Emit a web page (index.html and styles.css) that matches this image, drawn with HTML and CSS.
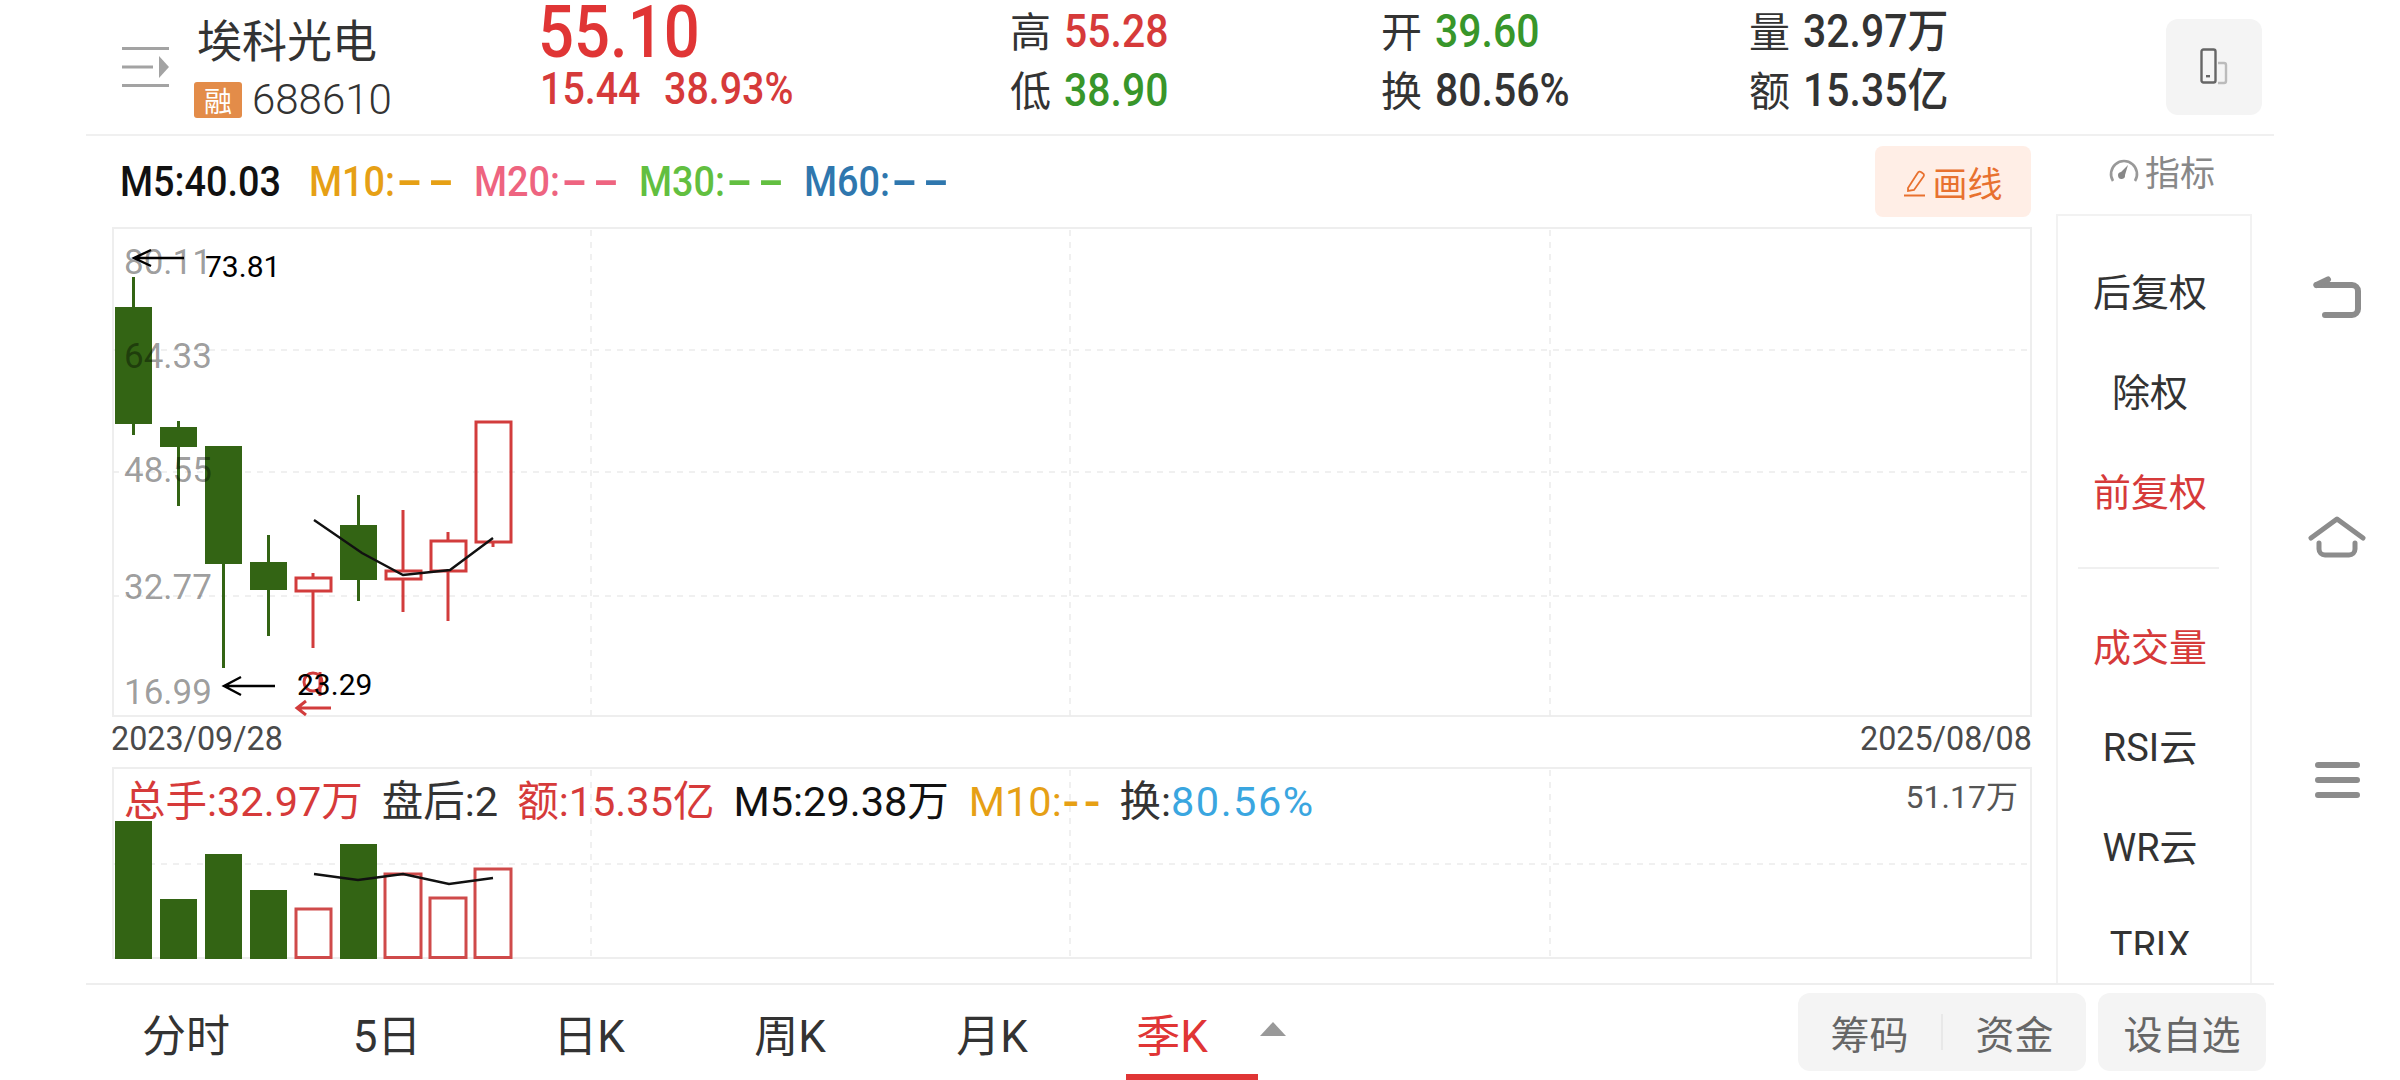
FILE: index.html

```html
<!DOCTYPE html>
<html lang="zh">
<head>
  <meta charset="UTF-8" />
  <title>埃科光电 688610</title>
  <link rel="stylesheet" href="styles.css">
</head>
<body>
<div class="screen">
  <div class="app">

    <!-- Header -->
    <div class="header">
      <svg class="menu-icon" width="47" height="40" viewBox="0 0 47 40">
        <path d="M0 1.500h47M0 20h31M0 38.500h47" stroke="#a3a3a3" stroke-width="3" fill="none"/>
        <path d="M37 9l10 11-10 11z" fill="#a3a3a3"/>
      </svg>
      <div class="stock-name">
        <div class="name">埃科光电</div>
        <div class="code-row"><span class="rong">融</span><span class="code">688610</span></div>
      </div>
      <div class="price-box">
        <div class="price">55.10</div>
        <div class="change"><span>15.44</span><span>38.93%</span></div>
      </div>
      <div class="stats">
        <div class="stat-col col-a">
          <div class="stat">高 <b class="red">55.28</b></div>
          <div class="stat">低 <b class="green">38.90</b></div>
        </div>
        <div class="stat-col col-b">
          <div class="stat">开 <b class="green">39.60</b></div>
          <div class="stat">换 <b>80.56%</b></div>
        </div>
        <div class="stat-col col-c">
          <div class="stat">量 <b>32.97万</b></div>
          <div class="stat">额 <b>15.35亿</b></div>
        </div>
      </div>
      <div class="device-btn">
        <svg width="28" height="38" viewBox="0 0 28 38">
          <rect x="1.500" y="1.500" width="14" height="33" rx="2" fill="none" stroke="#666" stroke-width="2.400"/>
          <rect x="6" y="27" width="4" height="2.400" fill="#666"/>
          <path d="M18 15h6a2 2 0 0 1 2 2v16a2 2 0 0 1-2 2h-6" fill="none" stroke="#bbb" stroke-width="2.400"/>
        </svg>
      </div>
    </div>

    <div class="body">
      <div class="charts">
        <div class="ma-row">
          <div class="ma-list">
            <div class="ma-item first"><span class="ma-black">M5:40.03</span></div>
            <div class="ma-item"><span class="ma-orange">M10:<i class="dash">--</i></span></div>
            <div class="ma-item"><span class="ma-pink">M20:<i class="dash">--</i></span></div>
            <div class="ma-item"><span class="ma-green">M30:<i class="dash">--</i></span></div>
            <div class="ma-item"><span class="ma-blue">M60:<i class="dash">--</i></span></div>
          </div>
          <div class="draw-btn">
            <svg width="24" height="32" viewBox="0 0 24 32">
              <path d="M5 22L15 6.500a2 2 0 0 1 3-.5l2 1.500a2 2 0 0 1 .5 3L11 24l-6 1z" fill="none" stroke="#e8712f" stroke-width="1.800"/>
              <path d="M1 29.500h21" stroke="#e8712f" stroke-width="2"/>
            </svg>
            <span>画线</span>
          </div>
        </div>

        <!-- K line chart -->
        <div class="kline">
          <svg width="1920" height="488" viewBox="112 228 1920 488" class="kline-svg">
            <g class="grid">
              <path d="M113 350H2030M113 472H2030M113 596H2030"/>
              <path d="M591 230V716M1070 230V716M1550 230V716"/>
            </g>
            <!-- down candles -->
            <g fill="#336414" stroke="none">
              <rect x="132" y="277" width="3" height="158"/>
              <rect x="115" y="307" width="37" height="117"/>
              <rect x="177" y="421" width="3" height="85"/>
              <rect x="160" y="427" width="37" height="20"/>
              <rect x="222" y="446" width="3" height="222"/>
              <rect x="205" y="446" width="37" height="118"/>
              <rect x="267" y="535" width="3" height="101"/>
              <rect x="250" y="562" width="37" height="28"/>
              <rect x="357" y="495" width="3" height="106"/>
              <rect x="340" y="525" width="37" height="55"/>
            </g>
            <!-- up candles -->
            <g fill="none" stroke="#d23c3c" stroke-width="3">
              <rect x="296" y="578" width="35" height="13"/>
              <path d="M313 573v5M313 591v57"/>
              <rect x="386" y="571" width="35" height="8"/>
              <path d="M403 510v61M403 579v33"/>
              <rect x="431" y="541" width="35" height="30"/>
              <path d="M448 532v9M448 571v50"/>
              <rect x="476" y="422" width="35" height="120"/>
              <path d="M493 542v5"/>
            </g>
            <path d="M314 520L362 553L403 575L450 570L493 538" fill="none" stroke="#111" stroke-width="2.400"/>
            <!-- high and low markers -->
            <path d="M184 258H134M151 250l-17 8 17 8" fill="none" stroke="#000" stroke-width="2.400"/>
            <path d="M275 686H224M241 677l-17 9 17 9" fill="none" stroke="#000" stroke-width="2.400"/>
            <path d="M331 708H297M306 701l-9 7 9 7" fill="none" stroke="#d23c3c" stroke-width="3"/>
            <circle cx="313" cy="682" r="9" fill="none" stroke="#d23c3c" stroke-width="3"/>
            <path d="M320 672v24" fill="none" stroke="#d23c3c" stroke-width="3"/>
          </svg>
          <span class="axis axis-1">80.11</span>
          <span class="axis axis-2">64.33</span>
          <span class="axis axis-3">48.55</span>
          <span class="axis axis-4">32.77</span>
          <span class="axis axis-5">16.99</span>
          <span class="mark mark-high">73.81</span>
          <span class="mark mark-low">23.29</span>
        </div>

        <div class="dates"><span class="date-l">2023/09/28</span><span class="date-r">2025/08/08</span></div>

        <!-- Volume chart -->
        <div class="volume">
          <svg width="1920" height="190" viewBox="112 769 1920 190" class="vol-svg">
            <g class="grid">
              <path d="M113 864H2030"/>
              <path d="M591 770V958M1070 770V958M1550 770V958"/>
            </g>
            <g fill="#336414">
              <rect x="115" y="821" width="37" height="138"/>
              <rect x="160" y="899" width="37" height="60"/>
              <rect x="205" y="854" width="37" height="105"/>
              <rect x="250" y="890" width="37" height="69"/>
              <rect x="340" y="844" width="37" height="115"/>
            </g>
            <g fill="none" stroke="#cf4a4a" stroke-width="3">
              <rect x="296" y="909" width="35" height="48.500"/>
              <rect x="385" y="874" width="36" height="83.500"/>
              <rect x="430" y="898" width="36" height="59.500"/>
              <rect x="475" y="869" width="36" height="88.500"/>
            </g>
            <path d="M314 874L358 880L403 874L449 884L493 878" fill="none" stroke="#111" stroke-width="2.400"/>
          </svg>
          <div class="vol-info">
            <span class="red">总手:32.97万</span>
            <span class="dark">盘后:2</span>
            <span class="red">额:15.35亿</span>
            <span class="ma-black">M5:29.38万</span>
            <span class="ma-orange vol-m10">M10:<i class="dash">--</i></span>
            <span class="dark">换:<i class="blue">80.56%</i></span>
          </div>
          <span class="vol-max">51.17万</span>
        </div>
      </div>

      <!-- Side list -->
      <div class="side">
        <div class="side-title">
          <svg width="30" height="28" viewBox="0 0 30 28">
            <path d="M4 25A13 13 0 1 1 26 25" fill="none" stroke="#999" stroke-width="2.600"/>
            <path d="M19 9l-3 10a3.500 3.500 0 1 1-4-3z" fill="#888"/>
          </svg>
          <span>指标</span>
        </div>
        <div class="side-list">
          <div class="side-item">后复权</div>
          <div class="side-item">除权</div>
          <div class="side-item red">前复权</div>
          <div class="side-line"></div>
          <div class="side-item red vol-item">成交量</div>
          <div class="side-item">RSI云</div>
          <div class="side-item">WR云</div>
          <div class="side-item last">TRIX</div>
        </div>
      </div>
    </div>

    <!-- Bottom tabs -->
    <div class="tabs">
      <div class="tab-list">
        <div class="tab t1">分时</div>
        <div class="tab t2">5日</div>
        <div class="tab t3">日K</div>
        <div class="tab t4">周K</div>
        <div class="tab t5">月K</div>
        <div class="tab t6 active">季K</div>
        <div class="arrow-up"></div>
      </div>
      <div class="tab-btns">
        <div class="btn-double"><span>筹码</span><i></i><span>资金</span></div>
        <div class="btn-single">设自选</div>
      </div>
    </div>
  </div>

  <!-- System nav -->
  <div class="sys-nav">
    <svg class="nav-back" width="48" height="42" viewBox="0 0 48 42">
      <path d="M3.500 9H39a6 6 0 0 1 6 6V33a6 6 0 0 1-6 6H12" fill="none" stroke="#8c8c8c" stroke-width="6" stroke-linecap="round"/>
      <path d="M3.500 9L15 3.500" fill="none" stroke="#8c8c8c" stroke-width="6" stroke-linecap="round"/>
    </svg>
    <svg class="nav-home" width="58" height="42" viewBox="0 0 58 42">
      <path d="M3 22L29 3L55 22" fill="none" stroke="#8c8c8c" stroke-width="5" stroke-linecap="round" stroke-linejoin="round"/>
      <path d="M11 27V33a6 6 0 0 0 6 6H41a6 6 0 0 0 6-6V27" fill="none" stroke="#8c8c8c" stroke-width="5" stroke-linecap="round"/>
    </svg>
    <svg class="nav-menu" width="45" height="36" viewBox="0 0 45 36">
      <path d="M3 3h39M3 18h39M3 33h39" stroke="#8c8c8c" stroke-width="6" stroke-linecap="round"/>
    </svg>
  </div>
</div>
</body>
</html>
```

FILE: styles.css

```css
* { box-sizing: border-box; }
html, body { margin: 0; padding: 0; background: #fff; }
body { font-family: "Noto Sans CJK SC", Roboto, sans-serif; color: #333; overflow: hidden; }
b { font-weight: 500; }
i { font-style: normal; }

.screen { width: 2400px; height: 1080px; display: flex; overflow: hidden; }
.app { width: 2188px; margin-left: 86px; display: flex; flex-direction: column; }
.red { color: #d63a3a; }
.green { color: #38962a; }
.blue { color: #3aa6e0; }
.dark { color: #333; }

/* Header */
.header { height: 136px; flex: none; border-bottom: 2px solid #f0f0f0; display: flex; align-items: flex-start; position: relative; }
.menu-icon { margin-left: 36px; margin-top: 47px; flex: none; }
.stock-name { margin-left: 25px; width: 346px; flex: none; }
.name { font-size: 45px; line-height: 52px; margin-top: 13px; margin-left: 3px; }
.code-row { display: flex; align-items: center; margin-top: 13px; height: 44px; }
.rong { width: 48px; height: 36px; background: #e38c49; color: #fff; font-size: 28px; line-height: 36px; text-align: center; border-radius: 3px; }
.code { font-size: 42px; line-height: 44px; margin-left: 10px; font-family: Roboto, sans-serif; font-weight: 300; }
.price-box { width: 470px; flex: none; font-family: Roboto, sans-serif; color: #e03535; }
.price { font-size: 72px; line-height: 62px; margin-top: 2px; margin-left: -2px; transform: scaleX(.88); transform-origin: left; font-weight: 500; }
.change { font-size: 45px; line-height: 48px; margin-top: 1px; display: flex; color: #d63a3a; font-weight: 500; }
.change span { display: block; width: 124px; transform: scaleX(.875); transform-origin: left; white-space: nowrap; }
.stats { display: flex; flex: 1; padding-top: 1px; }
.stat-col { display: flex; flex-direction: column; gap: 3px; }
.col-a { width: 371px; }
.col-b { width: 368px; }
.col-c { width: 300px; }
.stat { font-size: 41px; line-height: 56px; height: 56px; white-space: nowrap; }
.stat b { display: inline-block; margin-left: 4px; font-size: 46px; transform: scaleX(.89); transform-origin: left; font-family: Roboto, "Noto Sans CJK SC", sans-serif; }
.device-btn { position: absolute; right: 12px; top: 19px; width: 96px; height: 96px; background: #f4f4f4; border-radius: 12px; display: flex; align-items: center; justify-content: center; }

.body { flex: 1; display: flex; min-height: 0; }
.charts { width: 1946px; flex: none; padding-left: 26px; }
.ma-row { height: 91px; display: flex; align-items: center; justify-content: space-between; }
.ma-list { display: flex; font-family: Roboto, sans-serif; font-size: 42px; font-weight: 500; padding-left: 8px; white-space: nowrap; }
.ma-item { width: 165px; }
.ma-item.first { width: 189px; }
.ma-item span { display: inline-block; transform: scaleX(.9); transform-origin: left; }
.dash { display: inline-block; font-weight: 700; transform: scaleX(1.9); transform-origin: left; letter-spacing: 2px; margin-right: 30px; }
.ma-black { color: #111; }
.ma-orange { color: #e6a015; }
.ma-pink { color: #ee6480; }
.ma-green { color: #62bf40; }
.ma-blue { color: #2f77ae; }
.draw-btn { width: 156px; height: 71px; background: #ffeee6; border-radius: 8px; color: #e8712f; font-size: 35px; display: flex; align-items: center; justify-content: center; gap: 5px; margin-right: 1px; }

.kline, .volume { border: 2px solid #eeeeee; position: relative; width: 1920px; }
.kline { height: 490px; }
.kline-svg { display: block; margin: -1px 0 0 -2px; }
.vol-svg { display: block; margin: 0 0 0 -2px; }
.grid path { stroke: #ececec; stroke-width: 1.5; stroke-dasharray: 6 6; fill: none; }
.axis { position: absolute; left: 10px; color: rgba(0,0,0,.4); font-family: Roboto, sans-serif; font-size: 35px; line-height: 40px; }
.axis-1 { top: 14px; }
.axis-2 { top: 108px; }
.axis-3 { top: 222px; }
.axis-4 { top: 339px; }
.axis-5 { top: 444px; }
.mark { position: absolute; color: #000; font-family: Roboto, sans-serif; font-size: 30px; line-height: 34px; }
.mark-high { left: 91px; top: 21px; }
.mark-low { left: 183px; top: 439px; }

.dates { height: 50px; display: flex; justify-content: space-between; align-items: center; width: 1920px; font-family: Roboto, sans-serif; font-size: 34px; color: #4a4a4a; padding-bottom: 8px; }
.date-l { transform: scaleX(.95); transform-origin: left; margin-left: -1px; }
.date-r { transform: scaleX(.95); transform-origin: right; }
.volume { height: 192px; }
.vol-info { position: absolute; left: 10px; top: 6px; display: flex; gap: 19px; font-size: 41.5px; line-height: 54px; white-space: nowrap; font-family: Roboto, "Noto Sans CJK SC", sans-serif; }
.vol-m10 { margin-left: 1px; }
.vol-info .dash { transform: scaleX(1.1); letter-spacing: 3px; margin-right: 0; }
.vol-info .blue { letter-spacing: 1.5px; }
.vol-max { position: absolute; right: 12px; top: 6px; font-size: 32px; line-height: 44px; color: #555; font-family: Roboto, "Noto Sans CJK SC", sans-serif; }

/* Side */
.side { width: 242px; flex: none; }
.side-title { height: 68px; margin-bottom: 10px; padding-left: 18px; display: flex; align-items: center; justify-content: center; gap: 6px; color: #888; font-size: 35px; }
.side-list { width: 196px; margin-left: 24px; height: 769px; border: 2px solid #f2f2f2; border-bottom: 0; overflow: hidden; }
.side-item { height: 100px; padding-right: 8px; display: flex; align-items: center; justify-content: center; font-size: 38px; white-space: nowrap; font-family: Roboto, "Noto Sans CJK SC", sans-serif; }
.side-item:first-child { margin-top: 23px; }
.side-line { height: 2px; background: #f0f0f0; margin: 28px 31px 0 20px; }
.vol-item { margin-top: 25px; }
.side-item.last { display: block; text-align: center; height: 61px; line-height: 104px; overflow: hidden; }

/* Tabs */
.tabs { height: 97px; flex: none; border-top: 2px solid #eeeeee; display: flex; justify-content: space-between; padding-right: 8px; }
.tab-list { position: relative; flex: 1; }
.tab { position: absolute; top: 0; height: 95px; padding-top: 1px; font-size: 44px; display: flex; align-items: center; justify-content: center; font-family: Roboto, "Noto Sans CJK SC", sans-serif; }
.t1 { left: 35px; width: 130px; }
.t2 { left: 236px; width: 130px; }
.t3 { left: 438px; width: 130px; }
.t4 { left: 639px; width: 130px; }
.t5 { left: 841px; width: 130px; }
.t6 { left: 1040px; width: 132px; }
.tab.active { color: #e03535; border-bottom: 6px solid #e03535; padding: 7px 40px 0 0; }
.arrow-up { position: absolute; left: 1174px; top: 37px; width: 0; height: 0; border-left: 13px solid transparent; border-right: 13px solid transparent; border-bottom: 14px solid #999; }
.tab-btns { display: flex; gap: 12px; padding-top: 8px; }
.btn-double { width: 288px; height: 78px; background: #f4f4f4; border-radius: 12px; display: flex; align-items: center; color: #666; font-size: 39px; }
.btn-double span { flex: 1; text-align: center; }
.btn-double i { width: 2px; height: 36px; background: #e8e8e8; }
.btn-single { width: 168px; height: 78px; background: #f4f4f4; border-radius: 12px; display: flex; align-items: center; justify-content: center; color: #666; font-size: 39px; }

/* System nav */
.sys-nav { flex: 1; display: flex; flex-direction: column; align-items: center; padding-top: 276px; }
.sys-nav svg { display: block; flex: none; }
.nav-home { margin-top: 198px; }
.nav-menu { margin-top: 204px; }
```
